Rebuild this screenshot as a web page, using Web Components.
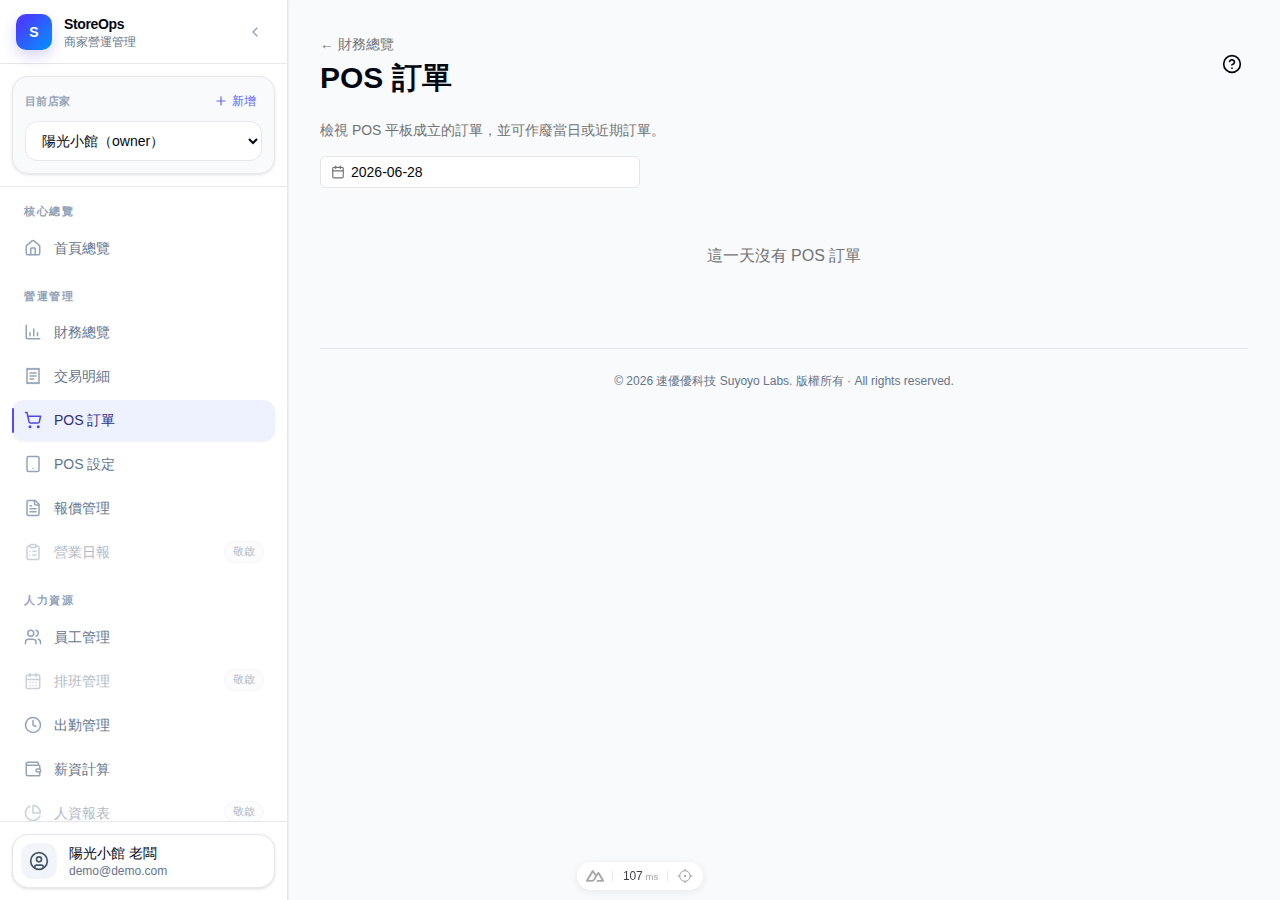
<!DOCTYPE html>
<html lang="zh-Hant">
<head>
<meta charset="utf-8">
<title>POS 訂單</title>
<style>
html,body{margin:0;height:100%;overflow:hidden}
body{font-family:"Liberation Sans",sans-serif;background:#f9fafb;color:#030712}
</style>
</head>
<body>
<app-shell>
  <side-bar slot="side">
    <brand-head slot="head" name="StoreOps" sub="商家營運管理"></brand-head>
    <store-card slot="store"></store-card>
    <nav-label first>核心總覽</nav-label>
    <nav-item icon="home">首頁總覽</nav-item>
    <nav-label>營運管理</nav-label>
    <nav-item icon="chart">財務總覽</nav-item>
    <nav-item icon="receipt">交易明細</nav-item>
    <nav-item icon="cart" active>POS 訂單</nav-item>
    <nav-item icon="tablet">POS 設定</nav-item>
    <nav-item icon="file">報價管理</nav-item>
    <nav-item icon="clipboard" disabled>營業日報</nav-item>
    <nav-label>人力資源</nav-label>
    <nav-item icon="users">員工管理</nav-item>
    <nav-item icon="calendar" disabled>排班管理</nav-item>
    <nav-item icon="clock">出勤管理</nav-item>
    <nav-item icon="wallet">薪資計算</nav-item>
    <nav-item icon="pie" disabled>人資報表</nav-item>
    <user-card slot="foot" name="陽光小館 老闆" email="demo@demo.com"></user-card>
  </side-bar>
  <page-main slot="main"></page-main>
</app-shell>
<dev-pill></dev-pill>
<script>
const ICONS={
home:'<path d="M15 21v-8a1 1 0 0 0-1-1h-4a1 1 0 0 0-1 1v8"/><path d="M3 10a2 2 0 0 1 .709-1.528l7-5.999a2 2 0 0 1 2.582 0l7 5.999A2 2 0 0 1 21 10v9a2 2 0 0 1-2 2H5a2 2 0 0 1-2-2z"/>',
chart:'<path d="M3 3v16a2 2 0 0 0 2 2h16"/><path d="M18 17v-4"/><path d="M13 17V8"/><path d="M8 17v-4"/>',
receipt:'<path d="M4 2v20l2-1 2 1 2-1 2 1 2-1 2 1 2-1 2 1V2l-2 1-2-1-2 1-2-1-2 1-2-1-2 1Z"/><path d="M16 8H8"/><path d="M16 12H8"/><path d="M13 16H8"/>',
cart:'<circle cx="8" cy="21" r="1"/><circle cx="19" cy="21" r="1"/><path d="M2.05 2.05h2l2.66 12.42a2 2 0 0 0 2 1.58h9.78a2 2 0 0 0 1.95-1.57l1.65-7.43H5.12"/>',
tablet:'<rect width="16" height="20" x="4" y="2" rx="2" ry="2"/><line x1="12" x2="12.01" y1="18" y2="18"/>',
file:'<path d="M15 2H6a2 2 0 0 0-2 2v16a2 2 0 0 0 2 2h12a2 2 0 0 0 2-2V7Z"/><path d="M14 2v4a2 2 0 0 0 2 2h4"/><path d="M10 9H8"/><path d="M16 13H8"/><path d="M16 17H8"/>',
clipboard:'<rect width="8" height="4" x="8" y="2" rx="1" ry="1"/><path d="M16 4h2a2 2 0 0 1 2 2v14a2 2 0 0 1-2 2H6a2 2 0 0 1-2-2V6a2 2 0 0 1 2-2h2"/><path d="M12 11h4"/><path d="M12 16h4"/><path d="M8 11h.01"/><path d="M8 16h.01"/>',
users:'<path d="M16 21v-2a4 4 0 0 0-4-4H6a4 4 0 0 0-4 4v2"/><circle cx="9" cy="7" r="4"/><path d="M22 21v-2a4 4 0 0 0-3-3.87"/><path d="M16 3.13a4 4 0 0 1 0 7.75"/>',
calendar:'<path d="M8 2v4"/><path d="M16 2v4"/><rect width="18" height="18" x="3" y="4" rx="2"/><path d="M3 10h18"/><path d="M8 14h.01"/><path d="M12 14h.01"/><path d="M16 14h.01"/><path d="M8 18h.01"/><path d="M12 18h.01"/><path d="M16 18h.01"/>',
clock:'<circle cx="12" cy="12" r="10"/><polyline points="12 6 12 12 16 14"/>',
wallet:'<path d="M19 7V4a1 1 0 0 0-1-1H5a2 2 0 0 0 0 4h15a1 1 0 0 1 1 1v4h-3a2 2 0 0 0 0 4h3a1 1 0 0 0 1-1v-2a1 1 0 0 0-1-1"/><path d="M3 5v14a2 2 0 0 0 2 2h15a1 1 0 0 0 1-1v-4"/>',
pie:'<path d="M21.21 15.89A10 10 0 1 1 8 2.83"/><path d="M22 12A10 10 0 0 0 12 2v10z"/>',
plus:'<path d="M5 12h14"/><path d="M12 5v14"/>',
chevron:'<path d="m15 18-6-6 6-6"/>',
user:'<circle cx="12" cy="12" r="10"/><circle cx="12" cy="10" r="3"/><path d="M7 20.662V19a2 2 0 0 1 2-2h6a2 2 0 0 1 2 2v1.662"/>',
help:'<circle cx="12" cy="12" r="10"/><path d="M9.09 9a3 3 0 0 1 5.83 1c0 2-3 3-3 3"/><path d="M12 17h.01"/>',
date:'<path d="M8 2v4"/><path d="M16 2v4"/><rect width="18" height="18" x="3" y="4" rx="2"/><path d="M3 10h18"/>',
crosshair:'<circle cx="12" cy="12" r="8"/><path d="M12 1.5V4M12 20v2.5M1.5 12H4M20 12h2.5"/><circle cx="12" cy="12" r="1" fill="currentColor"/>'
};
const svg=(n,s,w=2)=>`<svg xmlns="http://www.w3.org/2000/svg" width="${s}" height="${s}" viewBox="0 0 24 24" fill="none" stroke="currentColor" stroke-width="${w}" stroke-linecap="round" stroke-linejoin="round" style="display:block;flex:none">${ICONS[n]}</svg>`;
const def=(name,render)=>customElements.define(name,class extends HTMLElement{
  constructor(){super();this.attachShadow({mode:'open'})}
  connectedCallback(){this.shadowRoot.innerHTML=render(this)}
});

def('app-shell',()=>`<style>:host{display:flex;height:100vh;overflow:hidden}</style><slot name="side"></slot><slot name="main"></slot>`);

def('side-bar',()=>`<style>
:host{display:flex;flex-direction:column;flex:none;width:287px;height:900px;background:#fff;border-right:1px solid #e5e7eb;box-shadow:1px 0 2px rgba(15,23,42,.06);position:relative;z-index:1}
.head{height:63px;border-bottom:1px solid #e5e7eb;flex:none}
.store{height:122px;border-bottom:1px solid #e5e7eb;flex:none}
nav{flex:1;min-height:0;overflow:hidden;padding:16px 12px 0 12px;display:flex;flex-direction:column;gap:3px}
.foot{height:79px;border-top:1px solid #e5e7eb;flex:none;box-sizing:border-box;padding:12px}
</style>
<div class="head"><slot name="head"></slot></div>
<div class="store"><slot name="store"></slot></div>
<nav><slot></slot></nav>
<div class="foot"><slot name="foot"></slot></div>`);

def('brand-head',h=>`<style>
:host{display:flex;align-items:center;height:63px;padding:0 16px;box-sizing:border-box;gap:12px}
.logo{width:36px;height:36px;border-radius:10px;background:linear-gradient(135deg,#4846ff 0%,#4640ff 20%,#0095ff 100%);color:#fff;font-weight:700;font-size:14px;display:flex;align-items:center;justify-content:center;box-shadow:0 6px 14px rgba(79,70,229,.22);flex:none}
.txt{flex:1;min-width:0}
.n{font-size:14px;font-weight:700;line-height:20px;letter-spacing:-.35px;color:#030712}
.s{font-size:12px;line-height:16px;color:#64748b}
.c{color:#94a3b8;width:32px;height:32px;display:flex;align-items:center;justify-content:center}
</style>
<div class="logo">S</div><div class="txt"><div class="n">${h.getAttribute('name')}</div><div class="s">${h.getAttribute('sub')}</div></div><div class="c">${svg('chevron',16)}</div>`);

def('store-card',()=>`<style>
:host{display:block;padding:12px 12px 0}
.card{box-sizing:border-box;height:98px;width:263px;border:1px solid #e5e7eb;border-radius:16px;background:#f8fafc;box-shadow:0 1px 3px rgba(15,23,42,.12);padding:12px}
.top{display:flex;justify-content:space-between;align-items:center;height:24px}
.l{font-size:11px;font-weight:700;color:#94a3b8;letter-spacing:.3px}
.a{display:flex;align-items:center;gap:4px;font-size:12px;font-weight:500;color:#6366f1;padding-right:6px}
select{display:block;margin-top:8px;width:100%;height:40px;box-sizing:border-box;border:1px solid #e5e7eb;border-radius:12px;background:#fff;padding:0 0 0 12px;font:14px "Liberation Sans",sans-serif;color:#030712}
</style>
<div class="card"><div class="top"><span class="l">目前店家</span><span class="a">${svg('plus',14)}新增</span></div>
<select><option>陽光小館（owner）</option></select></div>`);

def('nav-label',()=>`<style>
:host{display:block;font-size:11px;font-weight:700;line-height:16px;letter-spacing:1.65px;color:#94a3b8;padding:0 12px;margin:16.5px 0 5px}
:host([first]){margin-top:0}
</style><slot></slot>`);

def('nav-item',h=>{
 const act=h.hasAttribute('active'),dis=h.hasAttribute('disabled');
 return `<style>
:host{display:flex;align-items:center;flex:none;height:41px;box-sizing:border-box;padding:2px 11px 0 12px;gap:12px;border-radius:12px;font-size:14px;color:#64748b;position:relative}
:host([active]){background:#eef2ff;color:#312e81;box-shadow:0 1px 2px rgba(15,23,42,.06)}
:host([disabled]){opacity:.5}
.i{color:#94a3b8;margin-top:-2px}
:host([active]) .i{color:#4f46e5}
.bar{position:absolute;left:0;top:8px;bottom:8px;width:2px;background:#544cf5;border-radius:2px}
.t{flex:1}
.b{font-size:10.5px;line-height:19px;height:20px;box-sizing:content-box;padding:0 8px;border:1px solid #eef0f3;border-radius:999px;background:#f8fafc;color:#64748b;margin-top:-3px}
</style>${act?'<span class="bar"></span>':''}<span class="i">${svg(h.getAttribute('icon'),18,2)}</span><span class="t"><slot></slot></span>${dis?'<span class="b">敬啟</span>':''}`;
});

def('user-card',h=>`<style>
:host{display:flex;align-items:center;gap:12px;box-sizing:border-box;height:54px;width:263px;border:1px solid #e5e7eb;border-radius:16px;background:#fff;box-shadow:0 1px 3px rgba(15,23,42,.14);padding:0 8px}
.av{width:36px;height:36px;border-radius:12px;background:#f1f5f9;color:#475569;display:flex;align-items:center;justify-content:center;flex:none}
.n{font-size:14px;line-height:20px;font-weight:500;color:#030712}
.e{font-size:12px;line-height:16px;color:#64748b}
</style><div class="av">${svg('user',20)}</div><div><div class="n">${h.getAttribute('name')}</div><div class="e">${h.getAttribute('email')}</div></div>`);

def('page-main',()=>`<style>
:host{display:block;flex:1;min-width:0;box-sizing:border-box;padding:35px 32px 0;position:relative}
.back{font-size:14px;line-height:18px;color:#737373}
h1{margin:7px 0 0;font-size:30px;line-height:36px;font-weight:700;color:#030712}
.help{color:#030712;position:absolute;top:54px;right:38px}
.d{font-size:14px;line-height:20px;color:#737373;margin:24px 0 0}
.date{display:flex;align-items:center;gap:6px;box-sizing:border-box;width:320px;height:32px;margin-top:16px;background:#fff;border:1px solid #e5e7eb;border-radius:6px;padding:0 10px;font-size:14px;color:#030712}
.date span{color:#737373}
.empty{text-align:center;font-size:16px;line-height:24px;color:#737373;margin-top:56px}
footer{border-top:1px solid #e5e7eb;margin-top:80px;padding-top:24px;text-align:center;font-size:12px;line-height:16px;color:#64748b}
</style>
<div class="back">← 財務總覽</div>
<h1>POS 訂單</h1>
<div class="help">${svg('help',20)}</div>
<p class="d">檢視 POS 平板成立的訂單，並可作廢當日或近期訂單。</p>
<div class="date"><span>${svg('date',14,2)}</span>2026-06-28</div>
<div class="empty">這一天沒有 POS 訂單</div>
<footer>© 2026 速優優科技 Suyoyo Labs. 版權所有 · All rights reserved.</footer>`);

def('dev-pill',()=>`<style>
:host{position:fixed;left:577px;top:862px;width:126px;height:28px;box-sizing:border-box;display:flex;align-items:center;background:#fff;border-radius:14px;box-shadow:0 2px 8px rgba(15,23,42,.08);font-size:12px;color:#3f3f46;z-index:5}
.nuxt{width:18px;height:18px;margin-left:9px;fill:#a8a8a8;display:block}
.sep{width:1px;height:10px;background:#e5e5e5}
.ms{margin:0 9px 0 10px;white-space:nowrap;letter-spacing:-.2px}
.ms small{font-size:9.5px;color:#a3a3a3;letter-spacing:0}
.t{color:#a3a3a3;margin-left:9px}
</style>
<svg class="nuxt" viewBox="0 0 24 24"><path d="M13.4642 19.8295h8.9218c.2834 0 .5618-.0723.8072-.2098a1.5899 1.5899 0 0 0 .5908-.5732 1.5293 1.5293 0 0 0 .216-.783 1.529 1.529 0 0 0-.2167-.7828L17.7916 7.4142a1.5904 1.5904 0 0 0-.5907-.573 1.6524 1.6524 0 0 0-.807-.2099c-.2833 0-.5616.0724-.807.2098a1.5904 1.5904 0 0 0-.5907.5731L13.4642 9.99l-2.9954-5.0366a1.5913 1.5913 0 0 0-.591-.573 1.6533 1.6533 0 0 0-.8071-.2098c-.2834 0-.5617.0723-.8072.2097a1.5913 1.5913 0 0 0-.591.573L.2168 17.4808A1.5292 1.5292 0 0 0 0 18.2635c-.0001.2749.0744.545.216.783a1.59 1.59 0 0 0 .5908.5732c.2454.1375.5238.2098.8072.2098h5.6003c2.219 0 3.8554-.9454 4.9813-2.7899l2.7337-4.5922L16.3935 9.99l4.3944 7.382h-5.8586ZM7.2809 17.3697l-3.9082-.0009 5.8583-9.8421 2.9232 4.921-1.9572 3.2892c-.7478 1.1967-1.5972 1.6328-2.9161 1.6328z"/></svg>
<span class="sep" style="margin-left:8px"></span><span class="ms">107 <small>ms</small></span><span class="sep"></span>
<span class="t">${svg('crosshair',16,1.5)}</span>`);
</script>
</body>
</html>
